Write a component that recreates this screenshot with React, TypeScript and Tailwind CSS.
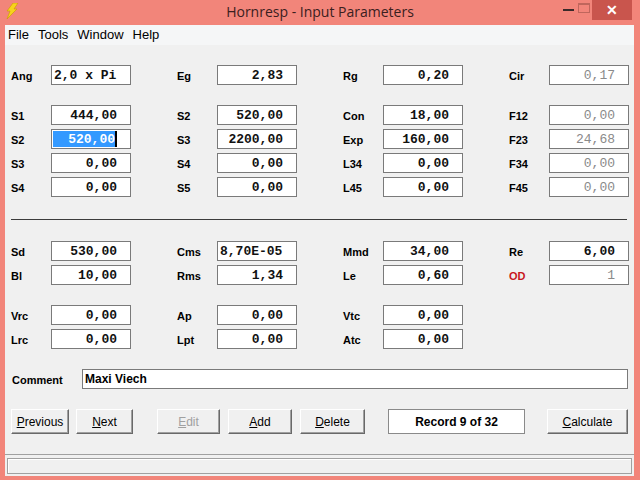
type F = {
  label: string
  value?: string
  left?: boolean
  dim?: boolean
  sel?: boolean
  red?: boolean
}

const mono = { fontFamily: '"Liberation Mono", "DejaVu Sans Mono", monospace' }

function Field({ label, value, left, dim, sel, red }: F) {
  if (!label) return <div className="w-[120px]" />
  return (
    <div className="flex w-[120px] items-center h-[20px]">
      <div
        className={`w-[40px] text-[11px] font-bold pt-[2px] ${red ? 'text-[#c8161d]' : 'text-black'}`}
      >
        {label}
      </div>
      <div
        className={`w-[80px] h-[20px] bg-white border border-[#7a7a7a] flex items-center text-[13px] font-bold leading-none ${
          left ? 'justify-start pl-[2px]' : sel ? 'pl-[1px] pr-[13px] py-[1px]' : 'justify-end pr-[13px]'
        } ${dim ? 'text-[#8a8a8a] font-normal' : 'text-[#111]'}`}
        style={mono}
      >
        {sel ? (
          <span className="flex-1 self-stretch bg-[#3399ff] text-white text-right flex items-center justify-end border-r-2 border-black">
            {value}
          </span>
        ) : (
          value
        )}
      </div>
    </div>
  )
}

function Row({ cells }: { cells: F[] }) {
  return (
    <div className="flex gap-x-[46px]">
      {cells.map((c, i) => (
        <Field key={i} {...c} />
      ))}
    </div>
  )
}

function Btn({ w, u, rest, disabled }: { w: string; u: string; rest: string; disabled?: boolean }) {
  return (
    <div
      className={`${w} h-[25px] flex items-center justify-center text-[12px] bg-[#f0f0f0] border border-t-white border-l-white border-r-[#696969] border-b-[#696969] shadow-[inset_-1px_-1px_0_#a0a0a0] ${
        disabled ? 'text-[#a0a0a0]' : 'text-black'
      }`}
    >
      <span className="underline">{u}</span>
      {rest}
    </div>
  )
}

export default function App() {
  const sans = { fontFamily: '"Liberation Sans", Arial, sans-serif' }
  return (
    <div className="w-[640px] h-[480px] bg-[#f2857a] flex flex-col overflow-hidden" style={sans}>
      {/* title bar */}
      <div className="h-[25px] relative flex items-center justify-center">
        <svg className="absolute left-[5px] top-[3px]" width="14" height="16" viewBox="0 0 14 16">
          <polygon points="8,0 13,0 9,6 12,6 2,16 5,8 2,8" fill="#f7d21c" stroke="#c99a00" strokeWidth="0.6" />
        </svg>
        <span className="text-[14px] text-[#3a2020] mt-[-2px]" style={{ fontFamily: '"Open Sans", sans-serif' }}>
          Hornresp - Input Parameters
        </span>
        <div className="absolute right-[8px] top-0 flex items-start">
          <div className="w-[16px] h-[20px] flex items-center justify-center">
            <div className="w-[11px] h-[2px] bg-[#3a2a2a]" />
          </div>
          <div className="w-[16px] h-[20px] flex items-center justify-center">
            <div className="w-[12px] h-[10px] border border-[#c0665c] border-t-2 mt-[-4px]" />
          </div>
          <div className="w-[40px] h-[20px] bg-[#c9554d] flex items-center justify-center text-white text-[14px] font-bold">
            ✕
          </div>
        </div>
      </div>

      {/* client area */}
      <div className="flex-1 ml-[5px] mr-[6px] mb-[4px] bg-[#f0f0f0] flex flex-col">
        <div className="h-[20px] bg-[#f5f6f7] flex items-center gap-[9px] pl-[3px] text-[13px] text-black">
          <span>File</span>
          <span>Tools</span>
          <span>Window</span>
          <span>Help</span>
        </div>

        <div className="pl-[6px] pt-[20px] flex flex-col">
          <Row
            cells={[
              { label: 'Ang', value: '2,0 x Pi', left: true },
              { label: 'Eg', value: '2,83' },
              { label: 'Rg', value: '0,20' },
              { label: 'Cir', value: '0,17', dim: true },
            ]}
          />
          <div className="mt-[20px] flex flex-col gap-[4px]">
            <Row
              cells={[
                { label: 'S1', value: '444,00' },
                { label: 'S2', value: '520,00' },
                { label: 'Con', value: '18,00' },
                { label: 'F12', value: '0,00', dim: true },
              ]}
            />
            <Row
              cells={[
                { label: 'S2', value: '520,00', sel: true },
                { label: 'S3', value: '2200,00' },
                { label: 'Exp', value: '160,00' },
                { label: 'F23', value: '24,68', dim: true },
              ]}
            />
            <Row
              cells={[
                { label: 'S3', value: '0,00' },
                { label: 'S4', value: '0,00' },
                { label: 'L34', value: '0,00' },
                { label: 'F34', value: '0,00', dim: true },
              ]}
            />
            <Row
              cells={[
                { label: 'S4', value: '0,00' },
                { label: 'S5', value: '0,00' },
                { label: 'L45', value: '0,00' },
                { label: 'F45', value: '0,00', dim: true },
              ]}
            />
          </div>

          <div className="mt-[22px] w-[616px] h-px bg-[#3c3c3c]" />

          <div className="mt-[21px] flex flex-col gap-[4px]">
            <Row
              cells={[
                { label: 'Sd', value: '530,00' },
                { label: 'Cms', value: '8,70E-05', left: true },
                { label: 'Mmd', value: '34,00' },
                { label: 'Re', value: '6,00' },
              ]}
            />
            <Row
              cells={[
                { label: 'Bl', value: '10,00' },
                { label: 'Rms', value: '1,34' },
                { label: 'Le', value: '0,60' },
                { label: 'OD', value: '1', dim: true, red: true },
              ]}
            />
          </div>
          <div className="mt-[20px] flex flex-col gap-[4px]">
            <Row
              cells={[
                { label: 'Vrc', value: '0,00' },
                { label: 'Ap', value: '0,00' },
                { label: 'Vtc', value: '0,00' },
                { label: '' },
              ]}
            />
            <Row
              cells={[
                { label: 'Lrc', value: '0,00' },
                { label: 'Lpt', value: '0,00' },
                { label: 'Atc', value: '0,00' },
                { label: '' },
              ]}
            />
          </div>

          <div className="mt-[20px] flex items-center h-[20px]">
            <div className="w-[71px] text-[11px] font-bold pl-px pt-[2px]">Comment</div>
            <div className="w-[546px] h-[20px] bg-white border border-[#7a7a7a] flex items-center pl-[2px] text-[12px] font-bold">
              Maxi Viech
            </div>
          </div>

          <div className="mt-[20px] flex items-center h-[25px]">
            <Btn w="w-[58px]" u="P" rest="revious" />
            <div className="w-[7px]" />
            <Btn w="w-[57px]" u="N" rest="ext" />
            <div className="w-[24px]" />
            <Btn w="w-[63px]" u="E" rest="dit" disabled />
            <div className="w-[8px]" />
            <Btn w="w-[64px]" u="A" rest="dd" />
            <div className="w-[8px]" />
            <Btn w="w-[65px]" u="D" rest="elete" />
            <div className="w-[23px]" />
            <div className="w-[137px] h-[25px] bg-white border border-[#8a8a8a] flex items-center justify-center text-[12px] font-bold">
              Record 9 of 32
            </div>
            <div className="w-[22px]" />
            <Btn w="w-[81px]" u="C" rest="alculate" />
          </div>
        </div>

        <div className="flex-1" />
        <div className="border-t border-[#a0a0a0] pt-[3px] pb-[2px] px-[2px]">
          <div className="h-[16px] border border-[#a0a0a0] bg-[#f0f0f0] shadow-[inset_1px_1px_0_#ffffff]" />
        </div>
      </div>
    </div>
  )
}
